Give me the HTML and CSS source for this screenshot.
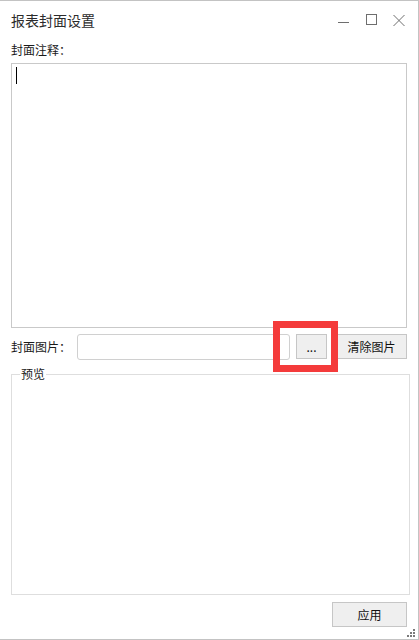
FILE: index.html
```html
<!DOCTYPE html>
<html lang="zh-CN">
<head>
<meta charset="utf-8">
<title>报表封面设置</title>
<link rel="stylesheet" href="styles.css">
</head>
<body>
<div class="window">
  <div class="titlebar">
    <span class="title">报表封面设置</span>
    <div class="controls">
      <svg class="ctl ctl-min" width="11" height="12" viewBox="0 0 11 12"><line x1="0" y1="8.5" x2="11" y2="8.5" stroke="#6e6e6e" stroke-width="1"/></svg>
      <svg class="ctl ctl-max" width="11" height="12" viewBox="0 0 11 12"><rect x="0.5" y="0.5" width="10" height="10" fill="none" stroke="#6e6e6e" stroke-width="1"/></svg>
      <svg class="ctl ctl-close" width="12" height="12" viewBox="0 0 12 12"><path d="M0.5 1 L11.5 12 M11.5 1 L0.5 12" stroke="#6e6e6e" stroke-width="1" fill="none"/></svg>
    </div>
  </div>
  <div class="content">
    <div class="label">封面注释：</div>
    <div class="textarea"><span class="caret"></span></div>
    <div class="row">
      <span class="row-label">封面图片：</span>
      <div class="input"></div>
      <button class="btn btn-browse">...</button>
      <button class="btn btn-clear">清除图片</button>
    </div>
    <fieldset class="preview"><legend>预览</legend></fieldset>
    <div class="footer"><button class="btn btn-apply">应用</button></div>
  </div>
  <svg class="grip" width="8" height="8" viewBox="0 0 8 8">
    <rect x="6" y="0" width="2" height="2" fill="#7a7a7a"/>
    <rect x="3" y="3" width="2" height="2" fill="#7a7a7a"/>
    <rect x="6" y="3" width="2" height="2" fill="#7a7a7a"/>
    <rect x="0" y="6" width="2" height="2" fill="#7a7a7a"/>
    <rect x="3" y="6" width="2" height="2" fill="#7a7a7a"/>
    <rect x="6" y="6" width="2" height="2" fill="#7a7a7a"/>
  </svg>
  <div class="highlight"></div>
</div>
</body>
</html>
```
FILE: styles.css
```css
* { box-sizing: border-box; }
html, body { margin: 0; padding: 0; background: #fff; }
body {
  font-family: "Noto Sans CJK SC", "Microsoft YaHei", sans-serif;
  font-size: 12px;
  color: #1a1a1a;
}
.window {
  position: relative;
  width: 419px;
  height: 640px;
  border-top: 1px solid #c3c3c3;
  border-right: 1px solid #c3c3c3;
  border-bottom: 1px solid #c3c3c3;
  background: #fff;
  overflow: hidden;
}
.titlebar {
  display: flex;
  height: 38px;
  padding-left: 11px;
}
.title {
  font-size: 14px;
  line-height: 38px;
  color: #2b2b2b;
}
.controls {
  margin-left: auto;
  margin-top: 13px;
  display: flex;
  align-items: flex-start;
  padding-right: 13px;
}
.ctl { display: block; }
.ctl-max { margin-left: 17px; }
.ctl-close { margin-left: 16px; }
.content {
  padding-left: 11px;
  display: flex;
  flex-direction: column;
}
.label {
  margin-top: 3px;
  line-height: 16px;
  height: 16px;
}
.textarea {
  margin-top: 5px;
  width: 396px;
  height: 265px;
  border: 1px solid #c9c9c9;
  padding: 3px 0 0 4px;
}
.caret {
  display: block;
  width: 1px;
  height: 17px;
  background: #000;
}
.row {
  margin-top: 6px;
  display: flex;
  align-items: flex-start;
  height: 26px;
}
.row-label {
  width: 66px;
  line-height: 26px;
}
.input {
  width: 213px;
  height: 26px;
  border: 1px solid #d0d0d0;
  border-radius: 3px;
  background: #fff;
}
.btn {
  font-family: inherit;
  font-size: 12px;
  color: #111;
  background: #efefef;
  border: 1px solid #c6c6c6;
  border-radius: 0;
  padding: 0;
  margin: 0;
  height: 25px;
  line-height: 22px;
}
.btn-browse {
  margin-left: 6px;
  width: 31px;
}
.btn-clear {
  margin-left: 9px;
  width: 71px;
}
.preview {
  margin: 6px 0 0 0;
  padding: 0;
  min-width: 0;
  width: 399px;
  height: 229px;
  border: 1px solid #dedede;
}
.preview legend {
  margin-left: 8px;
  padding: 0 1px;
  line-height: 16px;
  font-size: 12px;
}
.footer {
  margin-top: 7px;
  width: 396px;
  display: flex;
  justify-content: flex-end;
}
.btn-apply {
  width: 75px;
}
.grip {
  position: absolute;
  left: 407px;
  top: 628px;
}
.highlight {
  position: absolute;
  left: 273px;
  top: 320px;
  width: 65px;
  height: 51px;
  border: 7px solid #f43b3b;
}
```
